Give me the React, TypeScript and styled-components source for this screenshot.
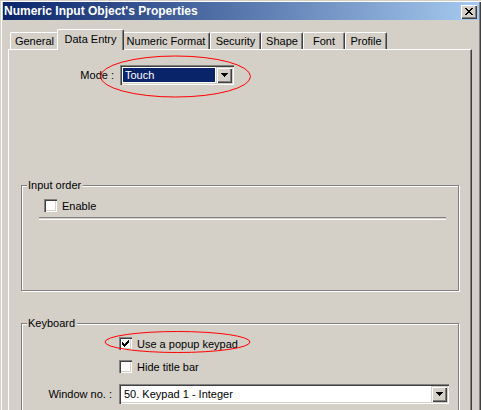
import React from "react";
import styled, { createGlobalStyle } from "styled-components";

const GlobalStyle = createGlobalStyle`
  html, body {
    margin: 0;
    padding: 0;
    background: #d4d0c8;
  }
  body {
    font-family: "Liberation Sans", Arial, sans-serif;
    font-size: 11px;
    color: #000;
  }
`;

const Window = styled.div`
  position: relative;
  width: 481px;
  height: 410px;
  overflow: hidden;
  box-sizing: border-box;
  padding: 2px 2px 0 3px;
  background: #d4d0c8;
  box-shadow: inset 1px 1px 0 #d4d0c8, inset 2px 2px 0 #fff, inset -1px 0 0 #404040, inset -2px 0 0 #808080;
  display: flex;
  flex-direction: column;
`;

const TitleBar = styled.div`
  height: 18px;
  flex-shrink: 0;
  display: flex;
  align-items: center;
  justify-content: space-between;
  padding: 0 2px 0 1px;
  background: linear-gradient(to right, #0a246a, #a6caf0);
  color: #fff;
  font-weight: bold;
  font-size: 12px;
`;

const CloseButton = styled.div`
  width: 16px;
  height: 14px;
  box-sizing: border-box;
  margin-top: 1px;
  background: #d4d0c8;
  box-shadow: inset 1px 1px 0 #fff, inset -1px -1px 0 #404040, inset -2px -2px 0 #808080;
  display: flex;
  align-items: center;
  justify-content: center;
`;

const Body = styled.div`
  flex: 1;
  display: flex;
  flex-direction: column;
  padding: 9px 0 0 5px;
`;

const TabStrip = styled.div`
  display: flex;
  align-items: flex-end;
  height: 20px;
  margin-left: 2px;
  position: relative;
  z-index: 1;
`;

const Tab = styled.div<{ $w: number; $active?: boolean }>`
  width: ${(p) => p.$w + (p.$active ? 4 : 0)}px;
  height: ${(p) => (p.$active ? 21 : 17)}px;
  margin: ${(p) => (p.$active ? "0 -2px -1px -2px" : "0")};
  box-sizing: border-box;
  background: #d4d0c8;
  border-top: 1px solid #fff;
  border-left: 1px solid #fff;
  border-right: 1px solid #404040;
  border-radius: 2px 2px 0 0;
  box-shadow: inset -1px 0 0 #808080;
  display: flex;
  justify-content: center;
  padding-top: ${(p) => (p.$active ? 3 : 2)}px;
  position: relative;
  z-index: ${(p) => (p.$active ? 2 : 1)};
  white-space: nowrap;
`;

const Panel = styled.div`
  flex: 1;
  width: 464px;
  box-sizing: border-box;
  border-top: 1px solid #fff;
  border-left: 1px solid #fff;
  border-right: 1px solid #404040;
  box-shadow: inset -1px 0 0 #808080;
  display: flex;
  flex-direction: column;
  padding-top: 15px;
`;

const FieldRow = styled.div<{ $labelWidth: number; $gap: number; $mt?: number }>`
  display: flex;
  align-items: center;
  height: 20px;
  margin-top: ${(p) => p.$mt ?? 0}px;
  & > label {
    width: ${(p) => p.$labelWidth}px;
    margin-right: ${(p) => p.$gap}px;
    text-align: right;
    white-space: nowrap;
  }
`;

const Combo = styled.div<{ $w: number }>`
  width: ${(p) => p.$w}px;
  height: 20px;
  box-sizing: border-box;
  background: #fff;
  box-shadow: inset 1px 1px 0 #808080, inset 2px 2px 0 #404040, inset -1px -1px 0 #fff, inset -2px -2px 0 #d4d0c8;
  padding: 2px;
  display: flex;
`;

const ComboText = styled.div<{ $selected?: boolean }>`
  flex: 1;
  display: flex;
  align-items: center;
  padding-left: 2px;
  margin: 1px;
  background: ${(p) => (p.$selected ? "#0a246a" : "transparent")};
  color: ${(p) => (p.$selected ? "#fff" : "#000")};
  white-space: nowrap;
`;

const DropButton = styled.div`
  width: 16px;
  height: 16px;
  box-sizing: border-box;
  background: #d4d0c8;
  box-shadow: inset 1px 1px 0 #d4d0c8, inset 2px 2px 0 #fff, inset -1px -1px 0 #404040, inset -2px -2px 0 #808080;
  display: flex;
  align-items: center;
  justify-content: center;
`;

const Group = styled.div<{ $top: number; $h: number }>`
  position: relative;
  margin: ${(p) => p.$top}px 0 0 12px;
  width: 438px;
  height: ${(p) => p.$h}px;
  box-sizing: border-box;
  border: 1px solid #808080;
  box-shadow: inset 1px 1px 0 #fff, 1px 1px 0 #fff;
  flex-shrink: 0;
  display: flex;
  flex-direction: column;
  padding-top: 13px;
`;

const Legend = styled.span`
  position: absolute;
  top: -8px;
  left: 5px;
  padding: 0 2px 0 1px;
  background: #d4d0c8;
  line-height: 14px;
`;

const CheckRow = styled.label<{ $indent: number; $mt?: number }>`
  display: flex;
  align-items: center;
  gap: 5px;
  height: 13px;
  margin-left: ${(p) => p.$indent}px;
  margin-top: ${(p) => p.$mt ?? 0}px;
  white-space: nowrap;
`;

const CheckBox = styled.span`
  width: 13px;
  height: 13px;
  box-sizing: border-box;
  background: #fff;
  box-shadow: inset 1px 1px 0 #808080, inset 2px 2px 0 #404040, inset -1px -1px 0 #fff, inset -2px -2px 0 #d4d0c8;
  display: flex;
  align-items: center;
  justify-content: center;
`;

const Separator = styled.div`
  margin: 5px 12px 0 17px;
  height: 1px;
  border-top: 1px solid #808080;
  border-bottom: 1px solid #fff;
`;

const Overlay = styled.svg`
  position: absolute;
  left: 0;
  top: 0;
  pointer-events: none;
`;

const Arrow = () => (
  <svg width="7" height="4" viewBox="0 0 7 4">
    <path d="M0 0h7v1h-1v1h-1v1h-1v1h-1v-1h-1v-1h-1v-1h-1z" fill="#000" />
  </svg>
);

const Check = () => (
  <svg width="7" height="7" viewBox="0 0 7 7">
    <path d="M0 2h1v1h1v1h1v-1h1v-1h1v-1h1v-1h1v3h-1v1h-1v1h-1v1h-1v1h-1v-1h-1v-1h-1v-1h-1z" fill="#000" />
  </svg>
);

const CloseX = () => (
  <svg width="8" height="7" viewBox="0 0 8 7">
    <path d="M0 0h2v1h1v1h2v-1h1v-1h2v1h-1v1h-1v1h-1v1h1v1h1v1h1v1h-2v-1h-1v-1h-2v1h-1v1h-2v-1h1v-1h1v-1h1v-1h-1v-1h-1v-1h-1z" fill="#000" />
  </svg>
);

const CheckItem = ({ label, checked, indent, mt }: { label: string; checked?: boolean; indent: number; mt?: number }) => (
  <CheckRow $indent={indent} $mt={mt}>
    <CheckBox>{checked ? <Check /> : null}</CheckBox>
    <span>{label}</span>
  </CheckRow>
);

const tabs = [
  { name: "General", w: 49 },
  { name: "Data Entry", w: 63, active: true },
  { name: "Numeric Format", w: 88 },
  { name: "Security", w: 51 },
  { name: "Shape", w: 42 },
  { name: "Font", w: 42 },
  { name: "Profile", w: 42 },
];

const App = () => {
  return (
    <>
      <GlobalStyle />
      <Window>
        <TitleBar>
          <span>Numeric Input Object's Properties</span>
          <CloseButton>
            <CloseX />
          </CloseButton>
        </TitleBar>
        <Body>
          <TabStrip>
            {tabs.map((t) => (
              <Tab key={t.name} $w={t.w} $active={t.active}>
                {t.name}
              </Tab>
            ))}
          </TabStrip>
          <Panel>
            <FieldRow $labelWidth={105} $gap={6}>
              <label>Mode :</label>
              <Combo $w={114}>
                <ComboText $selected>Touch</ComboText>
                <DropButton>
                  <Arrow />
                </DropButton>
              </Combo>
            </FieldRow>

            <Group $top={100} $h={106}>
              <Legend>Input order</Legend>
              <CheckItem label="Enable" indent={22} />
              <Separator />
            </Group>

            <Group $top={32} $h={120}>
              <Legend>Keyboard</Legend>
              <CheckItem label="Use a popup keypad" checked indent={97} />
              <CheckItem label="Hide title bar" indent={97} mt={10} />
              <FieldRow $labelWidth={90} $gap={7} $mt={11}>
                <label>Window no. :</label>
                <Combo $w={330}>
                  <ComboText>50. Keypad 1 - Integer</ComboText>
                  <DropButton>
                    <Arrow />
                  </DropButton>
                </Combo>
              </FieldRow>
            </Group>
          </Panel>
        </Body>
        <Overlay width="481" height="410">
          <ellipse cx="175.5" cy="76.5" rx="75" ry="20.5" fill="none" stroke="#ff0000" strokeWidth="1" />
          <ellipse cx="177.5" cy="342" rx="72.5" ry="10.5" fill="none" stroke="#ff0000" strokeWidth="1" />
        </Overlay>
      </Window>
    </>
  );
};

export default App;
